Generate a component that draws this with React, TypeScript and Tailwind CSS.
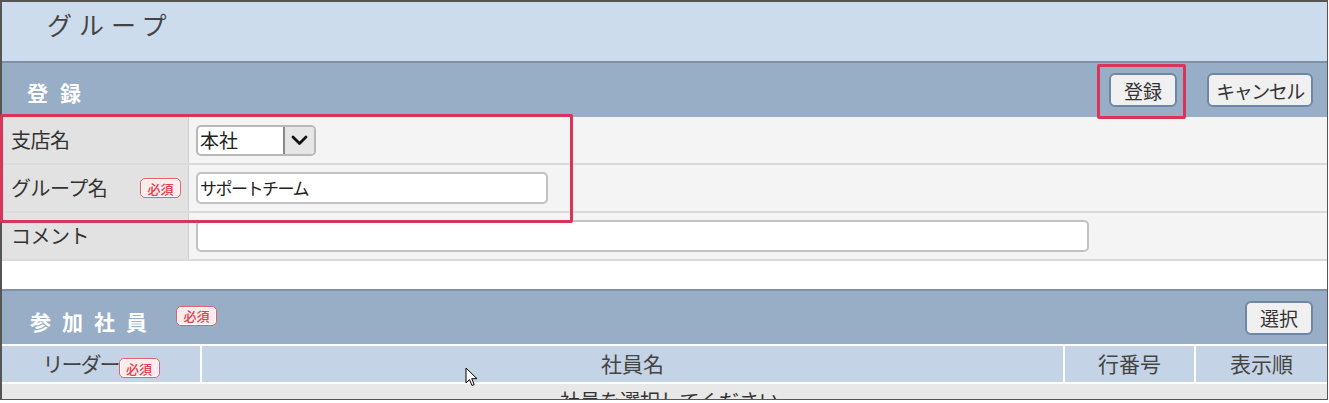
import React from 'react'

const FONT = { fontFamily: "'Noto Sans CJK JP', 'Noto Sans', sans-serif" }

function Hissu({ className = '' }: { className?: string }) {
  return (
    <span
      className={`inline-flex items-center justify-center w-[41px] h-[20px] rounded-[5px] border-[1.5px] border-[#e5606e] bg-[#fdecec] text-[13px] font-medium leading-none text-[#e0404f] shadow-[inset_0_0_0_1px_#fff] ${className}`}>
      必須
    </span>
  )
}

function Btn({ children, className = '' }: { children: React.ReactNode; className?: string }) {
  return (
    <button className={`h-[34px] rounded-[6px] border-2 border-[#6f87a5] bg-[#f0f0f0] text-[19px] text-[#333] leading-none ${className}`}>
      {children}
    </button>
  )
}

function Row({ label, badge, children }: { label: string; badge?: boolean; children: React.ReactNode }) {
  return (
    <div className="flex h-[48px] shrink-0 border-b-2 border-[#dadada]">
      <div className="w-[187px] shrink-0 bg-[#e2e2e2] border-r border-[#d0d0d0] flex items-center pl-[9px] pr-[7px] text-[20px] text-[#333]">
        <span className="flex-1 tracking-[-0.5px]">{label}</span>
        {badge && <Hissu />}
      </div>
      <div className="flex-1 bg-[#f4f4f4] flex items-center pl-[7px]">{children}</div>
    </div>
  )
}

export default function App() {
  return (
    <div style={FONT} className="relative w-[1329px] h-[403px] bg-white">
      <div className="w-[1328px] h-[400px] border-t-2 border-l-2 border-r border-b border-[#555] overflow-hidden flex flex-col">
        <div className="h-[61px] shrink-0 bg-[#cddced] border-b-2 border-[#7d90a8] flex items-start pt-[4px] pl-[45px] text-[25px] tracking-[7px] text-[#444]">
          グループ
        </div>

        <div className="h-[54px] shrink-0 bg-[#98adc6] flex items-center justify-between pl-[25px] pr-[14px]">
          <span className="text-[21px] font-bold tracking-[12px] text-white pt-[6px]">登録</span>
          <div className="flex items-center gap-[30px]">
            <Btn className="w-[68px]">登録</Btn>
            <Btn className="w-[106px] tracking-[-1.5px]">キャンセル</Btn>
          </div>
        </div>

        <Row label="支店名">
          <div className="flex h-[31px] w-[120px] rounded-[5px] border-2 border-[#b8b8b8] bg-white overflow-hidden">
            <span className="flex-1 flex items-center pl-[2px] text-[19px] text-[#222]">本社</span>
            <span className="w-[31px] flex items-center justify-center bg-[#e6e6e6] border-l-2 border-[#8a8a8a]">
              <svg width="17" height="11" viewBox="0 0 17 11" fill="none" stroke="#111" strokeWidth="2.8" strokeLinecap="round" strokeLinejoin="round">
                <path d="M2 2l6.5 6.5L15 2" />
              </svg>
            </span>
          </div>
        </Row>
        <Row label="グループ名" badge>
          <div className="h-[32px] w-[352px] rounded-[5px] border-2 border-[#c2c2c2] bg-white flex items-center pl-[2px] text-[17px] tracking-[-1.5px] text-[#222]">
            サポートチーム
          </div>
        </Row>
        <Row label="コメント">
          <div className="h-[32px] w-[893px] rounded-[5px] border-2 border-[#c2c2c2] bg-white" />
        </Row>

        <div className="h-[28px] shrink-0 bg-white" />

        <div className="h-[55px] shrink-0 bg-[#98adc6] border-t-2 border-[#7d90a8] flex items-center justify-between pl-[28px] pr-[14px]">
          <div className="flex items-center gap-[18px]">
            <span className="text-[21px] font-bold tracking-[11px] text-white pt-[8px]">参加社員</span>
            <Hissu className="-mt-[4px]" />
          </div>
          <Btn className="w-[68px]">選択</Btn>
        </div>

        <div className="h-[40px] shrink-0 border-t-2 border-b-2 border-white bg-[#c4d4e6] flex text-[21px] text-[#444]">
          <div className="w-[200px] shrink-0 border-r-2 border-white flex items-center justify-center">
            <span className="tracking-[-2px]">リーダー</span>
            <Hissu className="mt-[8px] w-[38px]" />
          </div>
          <div className="flex-1 border-r-2 border-white flex items-center justify-center">社員名</div>
          <div className="w-[131px] shrink-0 border-r-2 border-white flex items-center justify-center">行番号</div>
          <div className="w-[131px] shrink-0 flex items-center justify-center">表示順</div>
        </div>

        <div className="h-[40px] shrink-0 bg-[#e8e8e8] flex justify-center pt-[2px] pl-[10px] text-[20px] text-[#333]">
          社員を選択してください
        </div>
      </div>

      {/* red highlight boxes */}
      <div className="absolute left-0 top-[114px] w-[573px] h-[109px] border-[3px] border-[#d9345a] rounded-[2px]" />
      <div className="absolute left-[1097px] top-[64px] w-[89px] h-[55px] border-[3px] border-[#d9345a] rounded-[2px]" />

      {/* mouse cursor */}
      <svg className="absolute left-[465px] top-[367px]" width="13" height="20" viewBox="0 0 13 20">
        <path d="M1 1v15l3.5-3.5 2.5 6 2.2-1-2.5-5.8H12z" fill="#fff" stroke="#000" strokeWidth="1" strokeLinejoin="round" />
      </svg>
    </div>
  )
}
